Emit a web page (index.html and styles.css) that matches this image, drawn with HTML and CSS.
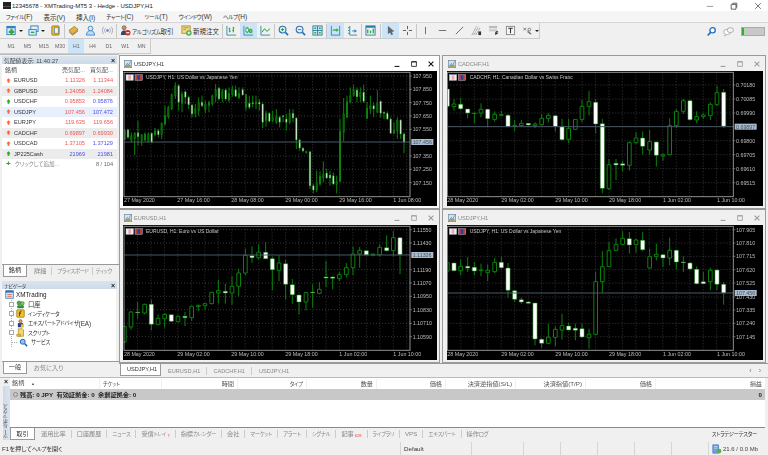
FILE: index.html
```html
<!DOCTYPE html>
<html lang="ja">
<head>
<meta charset="utf-8">
<title>XMTrading-MT5 3</title>
<link rel="stylesheet" href="styles.css">
</head>
<body>
<svg class="defs" width="0" height="0" aria-hidden="true">
  <symbol id="i-new" viewBox="0 0 12 12"><rect x="1" y="1.5" width="9" height="9" fill="#d8ecfa" stroke="#2a7fc4"/><rect x="1" y="1.5" width="9" height="2" fill="#2a7fc4"/><path d="M6 4v7M3 7.5h6" stroke="#3aa53a" stroke-width="2.4"/></symbol>
  <symbol id="i-prof" viewBox="0 0 12 12"><rect x="3" y="1" width="8" height="6" fill="#e4f1fb" stroke="#2a7fc4"/><rect x="1" y="5" width="8" height="6" fill="#e4f1fb" stroke="#2a7fc4"/><path d="M3 8h4" stroke="#3aa53a" stroke-width="1.6"/></symbol>
  <symbol id="i-folder" viewBox="0 0 12 12"><rect x="2" y="1" width="8" height="10" rx="1" fill="#eebc3a" stroke="#a07a18"/><rect x="5" y="3" width="4" height="6" fill="#fff6cf" stroke="#2a7fc4" stroke-width=".7"/></symbol>
  <symbol id="i-book" viewBox="0 0 12 12"><path d="M1 6 7 1.5 11 5 5 10z" fill="#e6b43a" stroke="#8a6a1a" stroke-width=".8"/><path d="M1.5 8 5 11l6-4.5" fill="none" stroke="#8a6a1a" stroke-width=".9"/></symbol>
  <symbol id="i-person" viewBox="0 0 12 12"><circle cx="6" cy="3.8" r="2.6" fill="#cfe6f8" stroke="#3d8bd0"/><path d="M1.5 11c.3-3.6 2-4.8 4.5-4.8s4.2 1.2 4.5 4.8z" fill="#bcdcf5" stroke="#3d8bd0"/></symbol>
  <symbol id="i-signal" viewBox="0 0 12 12"><circle cx="6" cy="6" r="1.4" fill="#5d7fb5"/><path d="M3.8 3.5a3.5 3.5 0 0 0 0 5M8.2 3.5a3.5 3.5 0 0 1 0 5M2 2a5.6 5.6 0 0 0 0 8M10 2a5.6 5.6 0 0 1 0 8" fill="none" stroke="#a5a5b5"/></symbol>
  <symbol id="i-algo" viewBox="0 0 12 12"><circle cx="4.5" cy="3" r="2.2" fill="#c6956a" stroke="#4a3a30" stroke-width=".6"/><path d="M1 11c0-4 1.5-5 3.5-5S8 7 8 11z" fill="#39455a"/><circle cx="8.5" cy="8.5" r="3" fill="#d8281c"/><rect x="6.8" y="7.8" width="3.4" height="1.3" fill="#fff"/></symbol>
  <symbol id="i-order" viewBox="0 0 12 12"><rect x="1" y="1" width="9" height="8" fill="#f3dc8c" stroke="#b09238"/><path d="M2.5 3h6M2.5 5h3" stroke="#b09238"/><circle cx="8.6" cy="8.6" r="3" fill="#45a845"/><path d="M8.6 6.8v3.6M6.8 8.6h3.6" stroke="#fff"/></symbol>
  <symbol id="i-bars" viewBox="0 0 12 12"><path d="M1 1v10h10" fill="none" stroke="#2a8fa8"/><path d="M4 3v5M3 4h1M4 7h1M8 2v6M7 6h1M8 3h1" fill="none" stroke="#169a2a"/></symbol>
  <symbol id="i-candle" viewBox="0 0 12 12"><path d="M1 1v10h10" fill="none" stroke="#2a8fa8"/><path d="M4.5 2v7M8.5 4v5" stroke="#169a2a"/><rect x="3.2" y="3.5" width="2.6" height="4" fill="#fff" stroke="#169a2a" stroke-width=".8"/><rect x="7.2" y="5.2" width="2.6" height="2.6" fill="#8fd08f" stroke="#169a2a" stroke-width=".8"/></symbol>
  <symbol id="i-line" viewBox="0 0 12 12"><path d="M1 1v10h10" fill="none" stroke="#2a8fa8"/><path d="m2 8 3-4 2.5 3L11 4" fill="none" stroke="#169a2a"/></symbol>
  <symbol id="i-zin" viewBox="0 0 12 12"><circle cx="5" cy="5" r="3.7" fill="#e6f3fc" stroke="#2a72b8" stroke-width="1.2"/><path d="m8 8 3 3" stroke="#2a72b8" stroke-width="1.8"/><path d="M5 3.2v3.6M3.2 5h3.6" stroke="#169a2a"/></symbol>
  <symbol id="i-zout" viewBox="0 0 12 12"><circle cx="5" cy="5" r="3.7" fill="#e6f3fc" stroke="#2a72b8" stroke-width="1.2"/><path d="m8 8 3 3" stroke="#2a72b8" stroke-width="1.8"/><path d="M3.2 5h3.6" stroke="#d84030"/></symbol>
  <symbol id="i-tile" viewBox="0 0 12 12"><rect x="1" y="1" width="10" height="10" fill="#cfe7f7" stroke="#2a7fa8"/><path d="M6 1v10M1 6h10" stroke="#2a7fa8"/><path d="M2.5 3.5h2M7.5 3.5h2M2.5 8.5h2M7.5 8.5h2" stroke="#3aa53a" stroke-width="1.6"/></symbol>
  <symbol id="i-shift" viewBox="0 0 12 12"><path d="M1.5 1v10M10.5 1v10M1 11h10" fill="none" stroke="#2a8fa8"/><path d="M3 5.5h5" stroke="#3aa53a" stroke-width="1.4"/><path d="m7 3.5 2.500 2-2.500 2z" fill="#3aa53a"/></symbol>
  <symbol id="i-scale" viewBox="0 0 12 12"><path d="M3 1v10h8" fill="none" stroke="#2a8fa8"/><path d="M5.5 6.500h3" stroke="#2a8fa8"/><path d="M8 4.500 11 6.500 8 8.500z" fill="#3a7fc8"/><path d="M1 3h2M1 6h2M1 9h2" stroke="#2a8fa8"/></symbol>
  <symbol id="i-tpl" viewBox="0 0 12 12"><rect x="1" y="1" width="10" height="10" fill="#e8f3fa" stroke="#2a7fa8"/><rect x="1" y="1" width="10" height="2" fill="#2a7fa8"/><path d="M3 9V5M6 9V6M9 9V4" stroke="#3aa53a" stroke-width="1.4"/></symbol>
  <symbol id="i-cursor" viewBox="0 0 12 12"><path d="M3.500 1.500v8l2-1.800 1.500 3 1.400-.7-1.500-2.900 2.700-.3z" fill="#666" stroke="#333" stroke-width=".4"/></symbol>
  <symbol id="i-cross" viewBox="0 0 12 12"><path d="M6 1v3.500M6 7.500V11M1 6h3.500M7.500 6H11" stroke="#555"/></symbol>
  <symbol id="i-vline" viewBox="0 0 12 12"><path d="M6 2v8" stroke="#666"/></symbol>
  <symbol id="i-hline" viewBox="0 0 12 12"><path d="M2 6h8" stroke="#666"/></symbol>
  <symbol id="i-tline" viewBox="0 0 12 12"><path d="m2 10 8-8" stroke="#666"/></symbol>
  <symbol id="i-fan" viewBox="0 0 12 12"><path d="M1 11 6 1M3 11 8 2M5 11 10 3" fill="none" stroke="#888" stroke-dasharray="1 .6"/><rect x="8" y="7" width="3" height="4" fill="#333"/></symbol>
  <symbol id="i-chan" viewBox="0 0 12 12"><rect x="1" y="1" width="9" height="2.5" fill="#bbb"/><rect x="1" y="4.5" width="9" height="2.5" fill="#ccc"/><path d="M8.500 7.500v3.500M8.500 7.500H11M8.500 9.200H10.500" stroke="#222" stroke-width="1.1" fill="none"/></symbol>
  <symbol id="i-text" viewBox="0 0 12 12"><rect x="1.500" y="1.500" width="9" height="9" fill="#f7f7f7" stroke="#888"/><path d="M3.500 3.500h5M6 3.500v5.500" stroke="#333" stroke-width="1.2"/></symbol>
  <symbol id="i-shape" viewBox="0 0 12 12"><path d="m1.500 3 3 3M4.500 3l-3 3" stroke="#777"/><path d="m6 7 4 3" stroke="#777" stroke-width="1.5"/><circle cx="8" cy="5" r="1.5" fill="none" stroke="#777"/></symbol>
  <symbol id="i-search" viewBox="0 0 12 12"><circle cx="7.2" cy="4.6" r="2.9" fill="#fff" stroke="#1f6fc4" stroke-width="1.4"/><path d="M5 7 1.800 10.400" stroke="#1f6fc4" stroke-width="1.8"/></symbol>
  <symbol id="i-chat" viewBox="0 0 12 12"><ellipse cx="4.500" cy="6.500" rx="3.800" ry="2.900" fill="#fff" stroke="#9a9a9a" stroke-width=".8"/><ellipse cx="8" cy="4.500" rx="3.500" ry="2.700" fill="#f4f4f4" stroke="#9a9a9a" stroke-width=".8"/><path d="m2.500 9-.8 2 2.500-1.500" fill="#fff" stroke="#9a9a9a" stroke-width=".6"/></symbol>
  <symbol id="i-chartwin" viewBox="0 0 12 12"><rect x=".5" y=".5" width="11" height="11" fill="#d4e3ef" stroke="#6d8295"/><path d="M2 10 5 5l2 3 3-6" fill="none" stroke="#2d7fb8"/><rect x="2" y="7.500" width="8" height="3.500" fill="#b59c4c"/></symbol>
  <symbol id="i-server" viewBox="0 0 12 12"><rect x="1" y="1" width="10" height="10" fill="#dbe9f7" stroke="#2f6fb5"/><rect x="1" y="1" width="10" height="2.500" fill="#2f6fb5"/><path d="M3 6h6M3 8.500h6" stroke="#e05030"/></symbol>
  <symbol id="i-account" viewBox="0 0 12 12"><circle cx="4" cy="4" r="2.600" fill="#45b045" stroke="#1a6d1a" stroke-width=".7"/><circle cx="8.500" cy="4.500" r="2.400" fill="#7ccf5a" stroke="#1a6d1a" stroke-width=".7"/><rect x="1.500" y="7" width="9" height="4" rx="1.500" fill="#2f8f3a"/></symbol>
  <symbol id="i-ind" viewBox="0 0 12 12"><rect x="1" y="1" width="10" height="10" rx="1" fill="#f0c030" stroke="#9a7a14"/><path d="M7.500 3c-1.500-.5-2 .3-2.200 1.500L4.500 9.500M3.800 5.500h3" fill="none" stroke="#222"/></symbol>
  <symbol id="i-ea" viewBox="0 0 12 12"><circle cx="6" cy="3" r="2.200" fill="#d5a15f" stroke="#4a3520" stroke-width=".6"/><rect x="2.500" y="5.500" width="7" height="5.500" fill="#1f3f8a"/><rect x="6.500" y="7" width="4" height="4" fill="#f0c030"/></symbol>
  <symbol id="i-script" viewBox="0 0 12 12"><path d="M3 1h5.500L10 2.500V11H3z" fill="#f4d765" stroke="#9a7a14" stroke-width=".8"/><path d="M1 8.500h5V11H1z" fill="#f0c030" stroke="#9a7a14" stroke-width=".7"/></symbol>
  <symbol id="i-service" viewBox="0 0 12 12"><circle cx="5" cy="5" r="3.300" fill="#8ec5ee" stroke="#1f63b0" stroke-width="1.300"/><path d="m7.600 7.600 3.200 3.200" stroke="#1f63b0" stroke-width="2"/></symbol>
  <symbol id="i-up" viewBox="0 0 8 8"><path d="M4 .5 7.500 4H5.500v3.500h-3V4H.5z"/></symbol>
  <symbol id="i-mem" viewBox="0 0 12 12"><rect x="1" y="1" width="7" height="10" fill="#6f9fd4" stroke="#2f6fb5" stroke-width=".7"/><path d="M2.500 3h4M2.500 5h4" stroke="#d8e8f7" stroke-width=".8"/><circle cx="8.500" cy="8.500" r="2.800" fill="#58b23a"/></symbol>
</svg>

<div class="app">
  <header class="titlebar">
    <i class="app-logo"></i>
    <span class="app-title">12345678 - XMTrading-MT5 3 - Hedge - USDJPY,H1</span>
    <span class="win-ctl">
      <svg class="ctl" viewBox="0 0 10 10"><path d="M1 5.500h8" stroke="#888"/></svg>
      <svg class="ctl" viewBox="0 0 10 10"><path d="M1.500 3h6v6h-6zM3.500 3V1.500h5v5H7.500" fill="none" stroke="#444"/></svg>
      <svg class="ctl" viewBox="0 0 10 10"><path d="m1.500 1.500 7 7M8.500 1.500l-7 7" stroke="#555"/></svg>
    </span>
  </header>

  <nav class="menubar">
    <span><i class="k">ファイル</i>(F)</span><span>表示(V)</span><span>挿入(I)</span><span><i class="k">チャート</i>(C)</span><span><i class="k">ツール</i>(T)</span><span><i class="k">ウインドウ</i>(W)</span><span><i class="k">ヘルプ</i>(H)</span>
  </nav>

  <div class="toolrow">
    <div class="toolbar">
      <button class="tb"><svg><use href="#i-new"/></svg></button><i class="caret"></i>
      <button class="tb"><svg><use href="#i-prof"/></svg></button><i class="caret"></i>
      <button class="tb"><svg><use href="#i-folder"/></svg></button>
      <i class="sep"></i>
      <button class="tb"><svg><use href="#i-book"/></svg></button>
      <button class="tb"><svg><use href="#i-person"/></svg></button>
      <button class="tb"><svg><use href="#i-signal"/></svg></button>
      <i class="sep"></i>
      <button class="tb wide"><svg><use href="#i-algo"/></svg><span><i class="k">アルゴリズム</i>取引</span></button>
      <button class="tb wide order"><svg><use href="#i-order"/></svg><span>新規注文</span></button>
      <i class="sep"></i>
      <button class="tb"><svg><use href="#i-bars"/></svg></button>
      <button class="tb on"><svg><use href="#i-candle"/></svg></button>
      <button class="tb"><svg><use href="#i-line"/></svg></button>
      <i class="sep"></i>
      <button class="tb"><svg><use href="#i-zin"/></svg></button>
      <button class="tb"><svg><use href="#i-zout"/></svg></button>
      <button class="tb"><svg><use href="#i-tile"/></svg></button>
      <i class="sep"></i>
      <button class="tb on"><svg><use href="#i-shift"/></svg></button>
      <button class="tb"><svg><use href="#i-scale"/></svg></button>
      <i class="sep"></i>
      <button class="tb"><svg><use href="#i-tpl"/></svg></button>
      <i class="sep gap"></i>
      <button class="tb on"><svg><use href="#i-cursor"/></svg></button>
      <button class="tb"><svg><use href="#i-cross"/></svg></button>
      <i class="sep"></i>
      <button class="tb"><svg><use href="#i-vline"/></svg></button>
      <button class="tb"><svg><use href="#i-hline"/></svg></button>
      <button class="tb"><svg><use href="#i-tline"/></svg></button>
      <button class="tb"><svg><use href="#i-fan"/></svg></button>
      <button class="tb"><svg><use href="#i-chan"/></svg></button>
      <button class="tb"><svg><use href="#i-text"/></svg></button>
      <button class="tb"><svg><use href="#i-shape"/></svg></button><i class="caret"></i>
    </div>
    <div class="tool-right">
      <svg class="ico"><use href="#i-search"/></svg>
      <svg class="ico"><use href="#i-chat"/></svg>
      <span class="conn"><i></i></span>
    </div>
  </div>

  <div class="periods">
    <span>M1</span><span>M5</span><span>M15</span><span>M30</span><span class="on">H1</span><span>H4</span><span>D1</span><span>W1</span><span>MN</span>
  </div>

  <main class="main">
    <aside class="side">
      <section class="panel watch">
        <div class="panel-head"><span>気配値表示: 11:40:27</span><b>×</b></div>
        <div class="quotes">
          <div class="q q-head"><span>銘柄</span><span class="n">売気配...</span><span class="n">買気配...</span></div>
          <div class="q"><span><svg class="arr red"><use href="#i-up"/></svg>EURUSD</span><span class="n red">1.11326</span><span class="n red">1.11344</span></div>
          <div class="q alt"><span><svg class="arr red"><use href="#i-up"/></svg>GBPUSD</span><span class="n red">1.24058</span><span class="n red">1.24084</span></div>
          <div class="q"><span><svg class="arr grn"><use href="#i-up"/></svg>USDCHF</span><span class="n red">0.95853</span><span class="n blue">0.95876</span></div>
          <div class="q sel"><span><svg class="arr red"><use href="#i-up"/></svg>USDJPY</span><span class="n red">107.456</span><span class="n blue">107.472</span></div>
          <div class="q"><span><svg class="arr red"><use href="#i-up"/></svg>EURJPY</span><span class="n red">119.635</span><span class="n red">119.656</span></div>
          <div class="q alt"><span><svg class="arr red"><use href="#i-up"/></svg>CADCHF</span><span class="n red">0.69897</span><span class="n red">0.69930</span></div>
          <div class="q"><span><svg class="arr red"><use href="#i-up"/></svg>USDCAD</span><span class="n red">1.37105</span><span class="n blue">1.37129</span></div>
          <div class="q alt"><span><svg class="arr grn"><use href="#i-up"/></svg>JP225Cash</span><span class="n blue">21969</span><span class="n blue">21981</span></div>
          <div class="q add"><span><b class="plus">+</b>クリックして追加...</span><span></span><span class="n">8 / 104</span></div>
        </div>
        <div class="side-tabs">
          <span class="on">銘柄</span><span>詳細</span><span><i class="k">プライスボード</i></span><span><i class="k">ティック</i></span>
        </div>
      </section>
      <section class="panel nav">
        <div class="panel-head"><span><i class="k">ナビゲータ</i></span><b>×</b></div>
        <div class="tree">
          <div class="node root"><svg><use href="#i-server"/></svg>XMTrading</div>
          <div class="kids">
            <div class="node"><i class="exp"></i><svg><use href="#i-account"/></svg>口座</div>
            <div class="node"><i class="exp"></i><svg><use href="#i-ind"/></svg><i class="k">インディケータ</i></div>
            <div class="node"><i class="exp"></i><svg><use href="#i-ea"/></svg><i class="k">エキスパートアドバイザ</i>(EA)</div>
            <div class="node"><i class="exp"></i><svg><use href="#i-script"/></svg><i class="k">スクリプト</i></div>
            <div class="node"><i class="exp none"></i><svg><use href="#i-service"/></svg><i class="k">サービス</i></div>
          </div>
        </div>
        <div class="side-tabs">
          <span class="on">一般</span><span>お気に入り</span>
        </div>
      </section>
    </aside>

    <div class="workspace">
      <div class="mdi">
        <article class="chartwin active">
          <div class="win-head"><svg class="wico"><use href="#i-chartwin"/></svg><span>USDJPY,H1</span>
            <span class="win-btns"><svg viewBox="0 0 10 10"><path d="M2 8h6" stroke="currentColor" stroke-width="1.3"/></svg><svg viewBox="0 0 10 10"><path d="M2 2h6v6H2z" fill="none" stroke="currentColor"/><path d="M2 2.500h6" stroke="currentColor"/></svg><svg viewBox="0 0 10 10"><path d="m2 2 6 6M8 2 2 8" stroke="currentColor" stroke-width="1.3"/></svg></span></div>
          <svg class="plot" data-chart="a" viewBox="9 51 942 405"></svg>
        </article>
        <article class="chartwin">
          <div class="win-head"><svg class="wico"><use href="#i-chartwin"/></svg><span>CADCHF,H1</span>
            <span class="win-btns"><svg viewBox="0 0 10 10"><path d="M2 8h6" stroke="currentColor" stroke-width="1.3"/></svg><svg viewBox="0 0 10 10"><path d="M2 2h6v6H2z" fill="none" stroke="currentColor"/><path d="M2 2.500h6" stroke="currentColor"/></svg><svg viewBox="0 0 10 10"><path d="m2 2 6 6M8 2 2 8" stroke="currentColor" stroke-width="1.3"/></svg></span></div>
          <svg class="plot" data-chart="b" viewBox="21 51 948 405"></svg>
        </article>
        <article class="chartwin">
          <div class="win-head"><svg class="wico"><use href="#i-chartwin"/></svg><span>EURUSD,H1</span>
            <span class="win-btns"><svg viewBox="0 0 10 10"><path d="M2 8h6" stroke="currentColor" stroke-width="1.3"/></svg><svg viewBox="0 0 10 10"><path d="M2 2h6v6H2z" fill="none" stroke="currentColor"/><path d="M2 2.500h6" stroke="currentColor"/></svg><svg viewBox="0 0 10 10"><path d="m2 2 6 6M8 2 2 8" stroke="currentColor" stroke-width="1.3"/></svg></span></div>
          <svg class="plot" data-chart="c" viewBox="9 54 942 405"></svg>
        </article>
        <article class="chartwin">
          <div class="win-head"><svg class="wico"><use href="#i-chartwin"/></svg><span>USDJPY,H1</span>
            <span class="win-btns"><svg viewBox="0 0 10 10"><path d="M2 8h6" stroke="currentColor" stroke-width="1.3"/></svg><svg viewBox="0 0 10 10"><path d="M2 2h6v6H2z" fill="none" stroke="currentColor"/><path d="M2 2.500h6" stroke="currentColor"/></svg><svg viewBox="0 0 10 10"><path d="m2 2 6 6M8 2 2 8" stroke="currentColor" stroke-width="1.3"/></svg></span></div>
          <svg class="plot" data-chart="d" viewBox="21 54 948 405"></svg>
        </article>
      </div>
      <div class="chart-tabs">
        <span class="on">USDJPY,H1</span><span>EURUSD,H1</span><span>CADCHF,H1</span><span>USDJPY,H1</span>
        <em>‹</em><em>›</em>
      </div>
    </div>
  </main>

  <section class="dock">
    <div class="dock-strip"><b>×</b><span><i class="k">ツールボックス</i></span></div>
    <div class="dock-body">
      <div class="trade-head">
        <span class="left">銘柄 <small>▲</small></span><span class="left"><i class="k">チケット</i></span><span>時間</span><span><i class="k">タイプ</i></span><span>数量</span><span>価格</span><span>決済逆指値(S/L)</span><span>決済指値(T/P)</span><span>価格</span><span>損益</span>
      </div>
      <div class="balance"><span><i class="ball"></i>残高: 0 JPY&nbsp; 有効証拠金: 0&nbsp; 余剰証拠金: 0</span><span>0</span></div>
      <div class="trade-empty"></div>
      <div class="dock-tabs">
        <span class="on">取引</span><span>運用比率</span><span>口座履歴</span><span><i class="k">ニュース</i></span><span>受信<i class="k">トレイ</i><sub>7</sub></span><span>指標<i class="k">カレンダー</i></span><span>会社</span><span><i class="k">マーケット</i></span><span><i class="k">アラート</i></span><span><i class="k">シグナル</i></span><span>記事<sub>628</sub></span><span><i class="k">ライブラリ</i></span><span>VPS</span><span><i class="k">エキスパート</i></span><span>操作<i class="k">ログ</i></span>
        <strong><i class="k">ストラテジーテスター</i></strong>
      </div>
    </div>
  </section>

  <footer class="status">
    <span class="s1">F1を押して<i class="k">ヘルプ</i>を開く</span><span class="s2">Default</span><span class="s3"></span><span class="s4"></span><span class="s4"></span><span class="s4"></span><span class="s4"></span><span class="s4"></span>
    <span class="s5"><svg><use href="#i-mem"/></svg>21.6 / 0.0 Mb</span>
  </footer>
</div>
<script src="chart.js"></script>
</body>
</html>
```
FILE: styles.css
```css
* { box-sizing: border-box; }
html, body { margin: 0; height: 100%; overflow: hidden; background: #f0f0f0; }
body {
  font-family: "Liberation Sans", "Noto Sans CJK JP", sans-serif;
  font-size: 6.5px;
  font-feature-settings: "palt";
  color: #333;
}
.defs { position: absolute; }
.app { width: 768px; height: 455px; display: flex; flex-direction: column; filter: blur(.3px); }
.k { font-style: normal; font-size: .85em; letter-spacing: -.25px; }

/* window title */
.titlebar { height: 12px; background: #fff; display: flex; align-items: center; padding-left: 3px; font-size: 6px; }
.app-logo { width: 8px; height: 7px; background: linear-gradient(#222 55%, #777 55%, #222 75%); margin-right: 1px; }
.app-title { color: #222; }
.win-ctl { margin-left: auto; display: flex; gap: 16px; padding-right: 6px; }
.ctl { width: 8px; height: 8px; display: block; }

.menubar { height: 11px; background: #f5f5f5; display: flex; gap: 11px; align-items: center; padding-left: 6px; font-size: 6.5px; color: #333; }

/* toolbars */
.toolrow { height: 17px; display: flex; align-items: center; border-top: 1px solid #d6d6d6; background: #f0f0f0; }
.toolbar { height: 16px; display: flex; align-items: center; width: 540px; padding-left: 3px; border-right: 1px solid #ccc; border-bottom: 1px solid #ccc; }
.tb { width: 17px; height: 15px; padding: 0; margin: 0; border: 0; background: none; display: flex; flex: none; align-items: center; justify-content: center; font: inherit; font-size: 6.5px; color: #333; white-space: nowrap; }
.tb svg { width: 11px; height: 11px; flex: none; }
.tb.on { background: #cce4f7; }
.tb.wide { width: 61px; gap: 1px; justify-content: flex-start; padding-left: 3px; }
.tb.order { width: 44px; }
.caret { width: 0; height: 0; flex: none; border: 2px solid transparent; border-top: 2.5px solid #222; border-bottom: 0; margin: 0 2px 0 -1px; }
.sep { width: 1px; height: 14px; background: #c8c8c8; flex: none; }
.sep.gap { margin-left: 1px; margin-right: 1px; }
.tool-right { flex: 1; display: flex; justify-content: flex-end; align-items: center; gap: 6px; padding-right: 3px; }
.ico { width: 11px; height: 11px; }
.conn { width: 24px; height: 9px; background: #c8c8c8; border: 1px solid #aaa; display: block; margin-left: 1px; }
.conn i { display: block; width: 2px; height: 100%; background: #2fb02f; }

.periods { height: 15px; display: flex; width: 151px; padding-left: 3px; border-right: 1px solid #ccc; border-bottom: 1px solid #ccc; flex: none; }
.periods span { width: 16.3px; display: flex; align-items: center; justify-content: center; font-size: 5.2px; color: #666; }
.periods .on { background: #cce4f7; }

/* main */
.main { height: 323px; display: flex; flex: none; }
.side { width: 119px; flex: none; display: flex; flex-direction: column; padding-left: 2px; gap: 4px; border-top: 1px solid #bbb; }
.panel { display: flex; flex-direction: column; min-height: 0; }
.watch { height: 222px; padding-top: 1px; }
.nav { flex: 1; padding-bottom: 3px; }
.panel-head { height: 8px; flex: none; background: linear-gradient(#d9e4ef, #cddae8); display: flex; justify-content: space-between; align-items: center; padding: 0 2px; font-size: 5.8px; color: #444; margin-right: 2px; }
.panel-head b { color: #222; font-size: 7px; }

.quotes { flex: 1; background: #fff; margin-right: 2px; }
.q { height: 10.5px; display: grid; grid-template-columns: 55px 28px 28px; align-items: center; font-size: 5.6px; color: #333; }
.q-head { height: 11px; color: #555; font-size: 6px; }
.q .n { text-align: right; }
.q > span:first-child { padding-left: 4px; display: flex; align-items: center; gap: 2px; white-space: nowrap; }
.q-head > span:first-child { padding-left: 3px; }
.q .n.red { color: #f25555; }
.q .n.blue { color: #4e4ef0; }
.alt { background: #ececec; }
.sel { background: #e6effb; }
.arr { width: 5px; height: 5px; flex: none; margin-right: 1px; }
.arr.red { fill: #ef6a3c; }
.arr.grn { fill: #21a821; }
.add { color: #888; }
.add > span:first-child { overflow: visible; color: #888; }
.add .n { color: #666; }
.plus { color: #21a821; font-size: 8px; line-height: 1; margin-right: 2px; font-weight: 700; }

.side-tabs { height: 13px; flex: none; display: flex; align-items: center; border-top: 1px solid #999; color: #888; font-size: 6.2px; padding-left: 1px; overflow: hidden; }
.side-tabs span { padding: 0 5px; border-right: 1px solid #ccc; line-height: 8px; white-space: nowrap; }
.side-tabs span:last-child { border-right: 0; }
.side-tabs span:nth-child(3) { padding-right: 3px; }
.side-tabs span:nth-child(4) { padding-left: 3px; }
.side-tabs .on { background: #fff; color: #333; height: 13px; line-height: 12px; padding: 0 4.8px; border: 1px solid #999; border-top: 0; margin-top: -1px; margin-right: 2px; }

.tree { flex: 1; background: #fff; margin-right: 3px; padding-top: 1px; font-size: 6.3px; color: #333; }
.node { height: 9.5px; display: flex; align-items: center; white-space: nowrap; }
.node svg { width: 9px; height: 9px; flex: none; margin: 0 3px 0 2px; }
.root { padding-left: 2px; color: #222; }
.root svg { margin: 0 2px 0 1px; }
.kids { margin-left: 9px; border-left: 1px dotted #aaa; }
.exp { width: 5px; height: 5px; border: 1px solid #aaa; background: #fff; margin-left: -3px; flex: none; }
.exp.none { border: 0; background: none; border-top: 1px dotted #aaa; margin-top: 5px; margin-left: 0; }

/* MDI */
.workspace { flex: 1; display: flex; flex-direction: column; min-width: 0; }
.mdi { flex: 1; display: grid; grid-template-columns: 321px 324px; grid-template-rows: 154px 154px; gap: 0 2px; padding-top: 1px; }
.chartwin { border: 1px solid #9a9a9a; padding: 0 2px 1px 3px; background: #f0f0f0; display: flex; flex-direction: column; }
.chartwin:nth-child(even) { padding-left: 4px; }
.chartwin.active { background: #fff; }
.win-head { height: 15px; flex: none; display: flex; align-items: center; font-size: 5.6px; color: #888; padding-left: 1px; }
.active .win-head { color: #333; }
.wico { width: 8px; height: 8px; margin-right: 2px; flex: none; }
.win-btns { margin-left: auto; display: flex; gap: 9px; padding-right: 2px; color: #999; }
.active .win-btns { color: #111; }
.win-btns svg { width: 8px; height: 8px; display: block; }
.plot { flex: none; display: block; height: 135px; width: 100%; background: #000; }

.chart-tabs { height: 14px; flex: none; display: flex; align-items: center; font-size: 5.6px; color: #888; border-top: 1px solid #999; }
.chart-tabs span { padding: 0 7px; border-right: 1px solid #ccc; line-height: 8px; width: 45.5px; white-space: nowrap; }
.chart-tabs span:last-of-type { border-right: 0; }
.chart-tabs .on { background: #fff; color: #333; height: 12px; line-height: 11px; margin-top: -2px; margin-left: 1px; border: 1px solid #999; border-top: 0; width: 41px; padding: 0 6px; }
.chart-tabs em { font-style: normal; color: #777; margin-left: auto; margin-right: 7px; font-size: 7px; }
.chart-tabs em + em { margin-left: 0; }

/* toolbox */
.dock { height: 63px; flex: none; display: flex; border-top: 1px solid #bbb; }
.dock-strip { width: 10px; flex: none; display: flex; flex-direction: column; align-items: center; padding-left: 2px; }
.dock-strip b { height: 7px; line-height: 7px; font-size: 7px; color: #222; }
.dock-strip span { flex: 1; width: 7px; background: linear-gradient(90deg, #d9e4ef, #cddae8); writing-mode: vertical-rl; transform: rotate(180deg); font-size: 6px; line-height: 7px; color: #444; white-space: nowrap; margin-top: 1px; padding-top: 1px; }
.dock-body { flex: 1; display: flex; flex-direction: column; padding-right: 3px; min-width: 0; }
.trade-head { height: 11px; flex: none; background: #fff; display: grid; grid-template-columns: 90px 62px 76px 69px 70px 69px 70px 70px 70px 109px; align-items: center; font-size: 6.2px; color: #555; }
.trade-head span { text-align: right; padding-right: 3px; border-right: 1px solid #f0f0f0; line-height: 10px; white-space: nowrap; }
.trade-head .left { text-align: left; padding-left: 2px; }
.trade-head .left + .left { padding-left: 3px; }
.trade-head span:last-child { border-right: 0; }
.trade-head small { font-size: 4px; margin-left: 5px; }
.balance { height: 11px; flex: none; background: #c8c8c8; display: flex; justify-content: space-between; align-items: center; padding: 0 3px; font-size: 6.2px; font-weight: 700; color: #222; }
.ball { display: inline-block; width: 5px; height: 5px; border: 1px solid #888; border-radius: 50%; margin-right: 2px; }
.trade-empty { flex: 1; background: #fff; }
.dock-tabs { height: 13px; flex: none; display: flex; align-items: center; border-top: 1px solid #8a8a8a; font-size: 6.2px; color: #888; }
.dock-tabs span { padding: 0 5px; border-right: 1px solid #ccc; line-height: 8px; white-space: nowrap; }
.dock-tabs span:nth-last-child(2) { border-right: 0; }
.dock-tabs .on { background: #fff; color: #333; height: 12px; line-height: 11px; padding: 0 5.3px; border: 1px solid #999; border-top: 0; margin-top: -1px; margin-right: 1px; }
.dock-tabs sub { color: #ef3b3b; font-size: 4px; margin-left: 1px; vertical-align: -1px; line-height: 0; }
.dock-tabs strong { margin-left: auto; margin-right: 8px; font-weight: 400; color: #333; }

.status { height: 15px; flex: none; display: flex; align-items: stretch; font-size: 6.2px; color: #333; padding-top: 2px; }
.status span { border-left: 1px solid #d5d5d5; display: flex; align-items: center; padding-left: 3px; }
.status .s1 { width: 400px; border-left: 0; padding-left: 2px; }
.s2 { width: 71px; }
.s3 { width: 52px; }
.s4 { width: 37px; }
.s5 { flex: 1; font-size: 6px; gap: 1px; color: #444; }
.s5 svg { width: 10px; height: 10px; }
```
FILE: chart.js
```js
// Candles: [high, top, bottom, low, white]
const W = 1;
const CHARTS = {
  a: {
    frame: [12, 55, 870, 428], first: 14, step: 10.1, half: 3, lx: 878, ty: 445,
    head: [18, 45, 78, 76, 'USDJPY, H1:  US Dollar vs Japanese Yen'],
    prices: [[66,'107.950'],[106,'107.850'],[146,'107.750'],[186,'107.650'],[226,'107.550'],[306,'107.350'],[346,'107.250'],[386,'107.150']],
    bid: [264, '107.456'],
    times: [[12,'27 May 2020'],[172,'27 May 16:00'],[334,'28 May 08:00'],[496,'29 May 00:00'],[658,'29 May 16:00'],[820,'1 Jun 08:00']],
    candles: [[227,227,257,258],[225,227,250,255,W],[235,245,258,265],[235,237,255,303],[200,236,248,275,W],[240,242,260,275],[235,240,258,262],[235,240,262,265],[235,238,265,268,W],[222,230,243,245],[225,230,242,250,W],[205,208,242,255],[155,185,210,215],[155,160,188,195],[118,122,165,168],[85,95,126,135],[90,95,145,170,W],[112,120,148,175],[110,113,130,150,W],[125,130,152,165,W],[150,153,180,190,W],[150,163,178,190],[130,147,170,185],[125,145,155,160,W],[140,150,168,178],[140,145,155,175],[122,125,150,155],[90,108,128,145],[98,103,135,140,W],[105,110,133,145],[103,108,135,140,W],[100,118,138,145],[95,105,122,128],[95,107,127,130,W],[100,118,131,135],[100,107,123,125,W],[120,122,160,170],[125,148,160,165,W],[125,146,149,160,W],[125,145,150,165],[135,145,150,170,W],[145,150,205,222,W],[170,178,200,218],[175,178,202,205,W],[170,190,200,205],[165,188,205,210],[185,190,205,220,W],[185,185,188,205,W],[180,195,205,230,W],[165,178,205,210],[165,178,192,205,W],[190,192,258,285,W],[255,258,282,290,W],[280,282,291,295,W],[290,292,297,298],[292,293,395,405,W],[390,395,408,418,W],[350,385,408,415],[352,367,390,395],[322,360,372,385],[345,357,372,375,W],[350,363,372,395,W],[355,365,390,393,W],[365,382,392,418],[195,232,382,385],[132,180,235,262],[125,143,190,192],[100,125,145,148],[92,108,125,127],[100,108,128,145,W],[100,115,128,145],[92,115,142,147,W],[145,162,193,195],[125,155,165,180],[145,155,165,190,W],[108,148,175,178],[140,142,178,190,W],[172,175,178,195,W],[172,178,195,198,W],[190,195,238,240,W],[205,230,238,240],[190,198,232,255],[196,198,240,255,W],[235,240,265,298,W]]
  },
  b: {
    frame: [22, 55, 880, 428], first: 22, step: 20.22, half: 7, lx: 888, ty: 445,
    head: [28, 55, 89, 76, 'CADCHF, H1:  Canadian Dollar vs Swiss Franc'],
    prices: [[93,'0.70180'],[135,'0.70085'],[177,'0.69990'],[260,'0.69800'],[302,'0.69705'],[344,'0.69610'],[386,'0.69515']],
    bid: [218, '0.69897'],
    times: [[22,'28 May 2020'],[184,'29 May 02:00'],[346,'29 May 10:00'],[507,'29 May 18:00'],[669,'1 Jun 02:00'],[831,'1 Jun 10:00']],
    candles: [[105,105,157,157,W],[135,150,158,170],[132,151,164,168,W],[165,165,177,193,W],[177,177,178,208,W],[148,166,177,190],[165,166,194,220,W],[172,181,196,203],[170,182,184,185],[180,184,218,220,W],[198,214,217,232],[198,208,215,218],[208,208,213,215,W],[205,210,215,222],[180,193,212,215],[178,184,193,205],[183,185,218,232,W],[195,218,257,260,W],[195,223,256,268],[195,196,226,228],[138,157,196,205],[110,143,157,185],[135,145,210,238,W],[195,209,403,418,W],[315,332,404,408],[315,328,333,378,W],[320,329,334,352,W],[262,266,334,350],[235,252,266,270],[232,252,277,302,W],[228,263,288,302],[262,264,304,338,W],[298,302,306,320],[193,215,302,304],[165,172,215,222],[135,140,172,180],[138,140,197,198,W],[172,188,198,208],[178,183,188,195],[145,151,185,198],[96,116,152,155],[105,115,217,222,W]]
  },
  c: {
    frame: [12, 58, 870, 430], first: 13, step: 20.17, half: 7, lx: 878, ty: 448,
    head: [18, 45, 78, 79, 'EURUSD, H1:  Euro vs US Dollar'],
    prices: [[68,'1.11550'],[108,'1.11430'],[188,'1.11190'],[228,'1.11070'],[268,'1.10950'],[308,'1.10830'],[349,'1.10710'],[389,'1.10590']],
    bid: [144, '1.11326'],
    times: [[12,'28 May 2020'],[172,'29 May 02:00'],[334,'29 May 10:00'],[496,'29 May 18:00'],[658,'1 Jun 02:00'],[820,'1 Jun 10:00']],
    candles: [[358,358,405,407],[312,315,360,368],[285,315,317,335,W],[290,292,318,322],[278,292,352,370,W],[322,334,352,355],[318,322,335,362],[322,323,343,345,W],[325,328,344,345],[315,328,332,357,W],[298,298,332,342],[293,295,299,313],[288,290,296,308],[255,256,290,292],[218,251,258,290],[230,253,258,290,W],[208,238,258,293],[185,198,238,268],[125,145,198,205],[118,146,152,168,W],[112,136,152,158],[105,136,155,157,W],[150,155,188,250,W],[145,168,190,222],[158,170,232,278,W],[216,233,263,290,W],[262,264,285,322,W],[255,257,285,310],[232,255,257,302,W],[225,247,259,262],[162,210,213,240,W],[208,210,214,247,W],[195,203,215,222],[168,182,203,212],[118,141,182,205],[120,130,141,182],[130,131,144,145,W],[141,141,144,148],[112,121,143,148],[85,122,131,133,W],[72,92,131,148],[90,92,143,202,W]]
  },
  d: {
    frame: [22, 58, 880, 430], first: 22, step: 20.22, half: 7, lx: 888, ty: 448,
    head: [28, 55, 89, 79, 'USDJPY, H1:  US Dollar vs Japanese Yen'],
    prices: [[68,'107.905'],[108,'107.810'],[148,'107.715'],[188,'107.620'],[228,'107.525'],[270,'107.430'],[309,'107.335'],[349,'107.240'],[389,'107.145']],
    bid: [258, '107.456'],
    times: [[22,'28 May 2020'],[184,'29 May 02:00'],[346,'29 May 10:00'],[507,'29 May 18:00'],[669,'1 Jun 02:00'],[831,'1 Jun 10:00']],
    candles: [[167,167,192,192],[167,168,191,193,W],[158,178,191,205],[150,178,183,195,W],[165,181,192,205,W],[170,189,191,208],[172,190,197,222],[152,166,194,198],[150,166,182,184,W],[168,183,250,272,W],[250,251,277,285,W],[272,278,285,290,W],[282,285,289,290,W],[287,288,396,415,W],[395,397,409,423,W],[350,391,409,412],[358,367,391,417],[320,356,369,398],[348,357,369,370,W],[350,364,370,400,W],[350,365,390,392,W],[365,382,392,425],[195,224,382,385],[132,179,224,258],[105,130,179,180],[94,112,130,132],[72,94,112,115],[75,95,114,140,W],[95,99,113,137],[75,100,128,133,W],[125,149,183,185],[110,142,149,160],[142,143,153,180,W],[92,130,153,175],[128,130,165,187,W],[148,165,167,195,W],[165,168,186,190,W],[178,187,230,232,W],[195,224,230,232,W],[182,190,224,250],[187,189,232,250,W],[225,232,258,293,W]]
  }
};

const NS = 'http://www.w3.org/2000/svg';
function add(parent, tag, attrs, text) {
  const el = document.createElementNS(NS, tag);
  for (const k in attrs) el.setAttribute(k, attrs[k]);
  if (text) el.textContent = text;
  parent.appendChild(el);
  return el;
}

function flag(svg, x, y, a, b) {
  add(svg, 'rect', { x, y, width: 22, height: 17, fill: a, stroke: '#b0b8c8', 'stroke-width': 1.5 });
  add(svg, 'rect', { x: x + 7, y: y + 2, width: 8, height: 13, fill: b });
}

document.querySelectorAll('svg[data-chart]').forEach(function (svg) {
  const c = CHARTS[svg.dataset.chart];
  const [l, t, r, b] = c.frame;
  const grid = { stroke: '#555', 'stroke-width': 2, 'stroke-dasharray': '3 6', fill: 'none' };
  let d = '';
  c.prices.forEach(function (p) { d += 'M' + l + ' ' + p[0] + 'H' + r; });
  for (let x = l + 40.4; x < r; x += 40.4) d += 'M' + x + ' ' + t + 'V' + b;
  add(svg, 'path', Object.assign({ d }, grid));

  // candles
  let wick = '', up = '', down = '';
  const h = c.half;
  c.candles.forEach(function (k, i) {
    const x = Math.round(c.first + i * c.step);
    wick += 'M' + x + ' ' + k[0] + 'V' + k[3];
    if (k[4]) {
      const w = 2 * h - 1.5;
      down += 'M' + (x - h + 0.75) + ' ' + k[1] + 'h' + w + 'V' + k[2] + 'h-' + w + 'z';
    } else {
      const w = 2 * h - 3;
      up += 'M' + (x - h + 1.5) + ' ' + k[1] + 'h' + w + 'V' + k[2] + 'h-' + w + 'z';
    }
  });
  add(svg, 'path', { d: wick, stroke: '#0a820a', 'stroke-width': 3, fill: 'none' });
  add(svg, 'path', { d: up, stroke: '#0a820a', 'stroke-width': 3, fill: '#000' });
  add(svg, 'path', { d: down, stroke: '#0a820a', 'stroke-width': 1.5, fill: '#fff' });

  // bid line and frame
  add(svg, 'path', { d: 'M' + l + ' ' + c.bid[0] + 'H' + r, stroke: '#4b5a68', 'stroke-width': 3 });
  add(svg, 'rect', { x: l, y: t, width: r - l, height: b - t, fill: 'none', stroke: '#8f8f8f', 'stroke-width': 3 });

  // labels
  const font = { 'font-family': 'Liberation Sans, sans-serif', 'font-size': 16, fill: '#bdbdbd' };
  c.prices.forEach(function (p) {
    add(svg, 'path', { d: 'M' + r + ' ' + p[0] + 'h6', stroke: '#8f8f8f', 'stroke-width': 2 });
    add(svg, 'text', Object.assign({ x: c.lx, y: p[0] + 6 }, font), p[1]);
  });
  add(svg, 'rect', { x: c.lx - 4, y: c.bid[0] - 9, width: 66, height: 18, fill: '#a9bccf' });
  add(svg, 'text', Object.assign({ x: c.lx, y: c.bid[0] + 6 }, font, { fill: '#44505c' }), c.bid[1]);
  c.times.forEach(function (p) {
    add(svg, 'text', Object.assign({ x: p[0], y: c.ty }, font), p[1]);
  });

  // header: two flags and the symbol line
  const [f1, f2, tx, ty, title] = c.head;
  flag(svg, f1, ty - 14, '#f0eef5', '#e8a8a8');
  flag(svg, f2, ty - 14, '#c83a3a', '#2a3f9a');
  add(svg, 'text', Object.assign({ x: tx, y: ty, 'xml:space': 'preserve' }, font, { fill: '#c8c8c8', 'font-size': 15 }), title);
});
```
